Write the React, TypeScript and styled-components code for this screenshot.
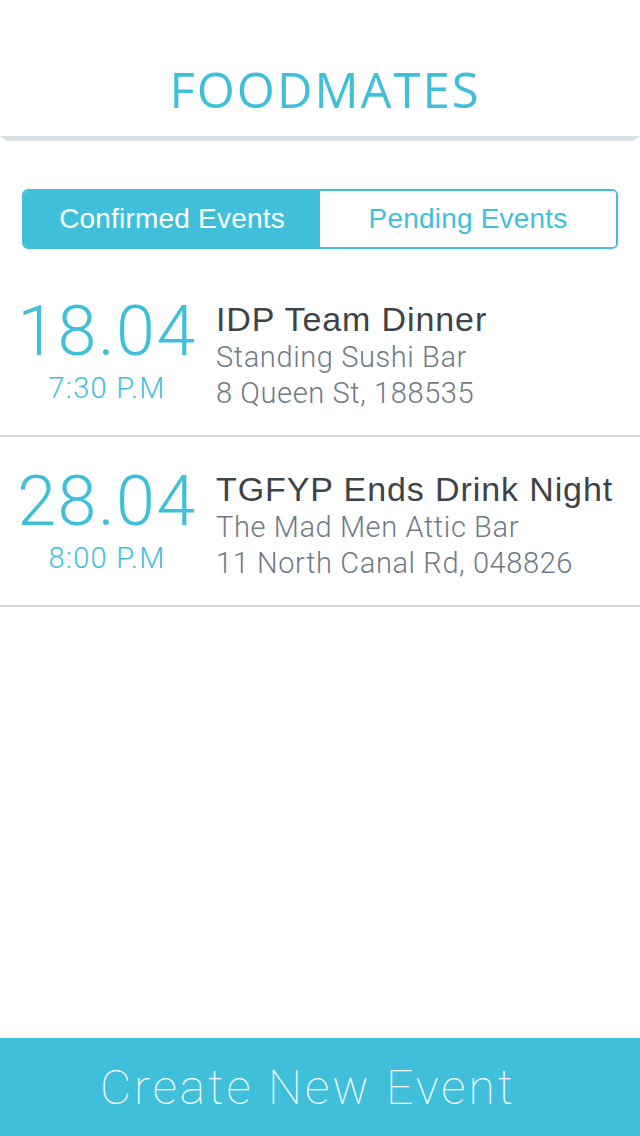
import React from "react";
import styled, { createGlobalStyle } from "styled-components";

const Global = createGlobalStyle`
  html, body { margin: 0; padding: 0; background: #ffffff; }
  #root { min-height: 100vh; }
  * { box-sizing: border-box; }
`;

const BLUE = "#3fbfda";

const Page = styled.div`
  display: flex;
  flex-direction: column;
  min-height: 100vh;
  background: #fff;
`;

const Header = styled.header`
  height: 136px;
  display: flex;
  align-items: flex-end;
  justify-content: center;
  padding: 0 0 22px 10px;
`;

const Title = styled.h1`
  margin: 0;
  font-family: "Open Sans", sans-serif;
  font-weight: 400;
  font-size: 49px;
  line-height: 1;
  letter-spacing: 2px;
  color: ${BLUE};
`;

const HeaderShadow = styled.div`
  height: 5px;
  background: #d8e2e5;
  clip-path: polygon(0 0, 100% 0, 99% 100%, 1% 100%);
`;

const Tabs = styled.div`
  margin: 48px 22px 0;
  height: 60px;
  display: grid;
  grid-template-columns: 1fr 1fr;
  border: 2px solid ${BLUE};
  border-radius: 6px;
  overflow: hidden;
`;

const Tab = styled.div<{ $active?: boolean }>`
  display: flex;
  align-items: center;
  justify-content: center;
  background: ${(p) => (p.$active ? BLUE : "#fff")};
  color: ${(p) => (p.$active ? "#fff" : BLUE)};
  font-family: "Liberation Sans", Arial, sans-serif;
  font-size: 28px;
  letter-spacing: 0.2px;
`;

const List = styled.div`
  margin-top: 18px;
`;

const Row = styled.div`
  height: 170px;
  border-bottom: 2px solid #d6d6d6;
  display: grid;
  grid-template-columns: 198px 1fr;
  column-gap: 10px;
  padding: 24px 0 0 8px;
`;

const DateCol = styled.div`
  display: flex;
  flex-direction: column;
  align-items: center;
  color: ${BLUE};
  font-family: Roboto, sans-serif;
  font-weight: 300;
`;

const Day = styled.div`
  font-size: 70px;
  line-height: 80px;
  letter-spacing: 1.5px;
`;

const Time = styled.div`
  font-size: 29px;
  line-height: 30px;
  letter-spacing: 1.3px;
  margin-top: 2px;
`;

const Info = styled.div`
  display: flex;
  flex-direction: column;
  padding-top: 8px;
`;

const EventName = styled.div`
  font-family: "Liberation Sans", Arial, sans-serif;
  font-size: 34px;
  line-height: 40px;
  color: #3d4347;
  letter-spacing: 0.9px;
  white-space: nowrap;
`;

const Detail = styled.div`
  font-family: Roboto, sans-serif;
  font-weight: 300;
  font-size: 29px;
  line-height: 36px;
  color: #6f7a84;
  letter-spacing: 0.6px;
  white-space: nowrap;
`;

const CreateButton = styled.button`
  margin-top: auto;
  height: 98px;
  width: 100%;
  border: none;
  background: ${BLUE};
  color: #fff;
  font-family: Roboto, sans-serif;
  font-weight: 100;
  font-size: 48px;
  letter-spacing: 3px;
  display: flex;
  align-items: center;
  justify-content: center;
  padding: 0 24px 0 0;
`;

const events = [
  { day: "18.04", time: "7:30 P.M", name: "IDP Team Dinner", place: "Standing Sushi Bar", address: "8 Queen St, 188535" },
  { day: "28.04", time: "8:00 P.M", name: "TGFYP Ends Drink Night", place: "The Mad Men Attic Bar", address: "11 North Canal Rd, 048826" },
];

export default function App() {
  return (
    <Page>
      <Global />
      <Header>
        <Title>FOODMATES</Title>
      </Header>
      <HeaderShadow />
      <Tabs>
        <Tab $active>Confirmed Events</Tab>
        <Tab>Pending Events</Tab>
      </Tabs>
      <List>
        {events.map((e) => (
          <Row key={e.day}>
            <DateCol>
              <Day>{e.day}</Day>
              <Time>{e.time}</Time>
            </DateCol>
            <Info>
              <EventName>{e.name}</EventName>
              <Detail>{e.place}</Detail>
              <Detail>{e.address}</Detail>
            </Info>
          </Row>
        ))}
      </List>
      <CreateButton>Create New Event</CreateButton>
    </Page>
  );
}
